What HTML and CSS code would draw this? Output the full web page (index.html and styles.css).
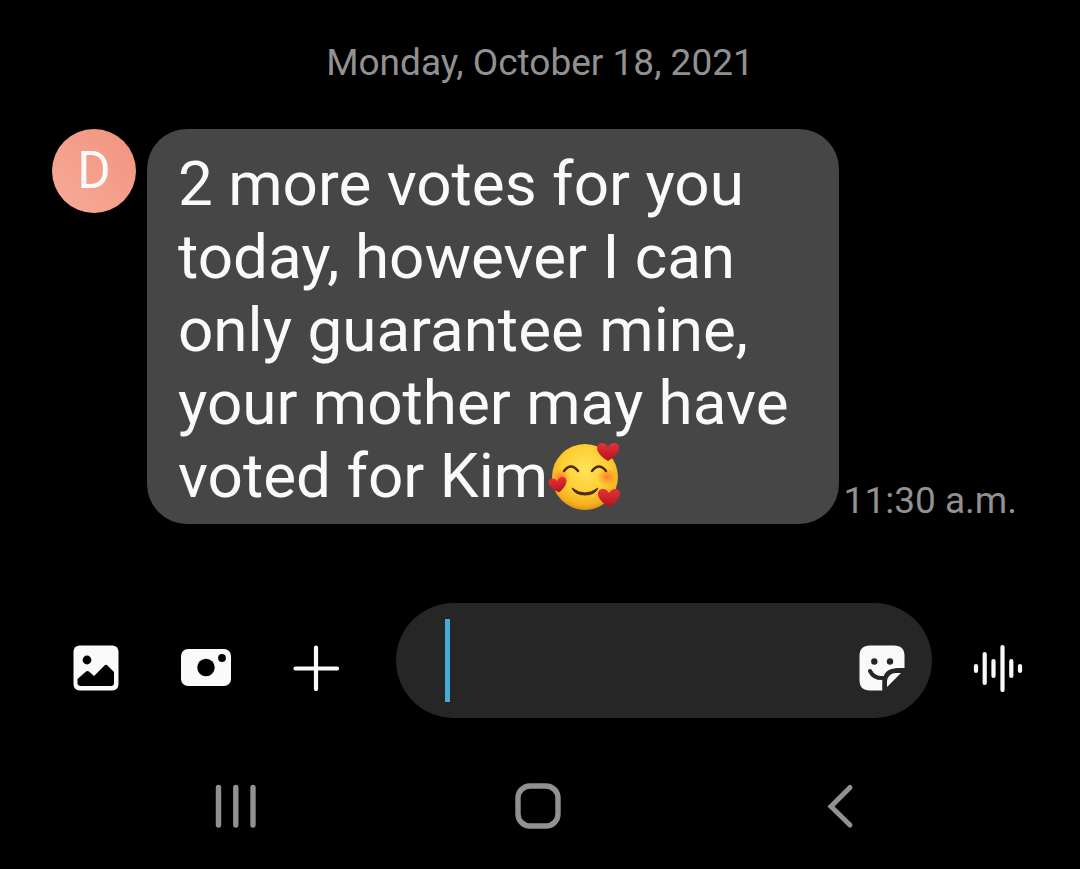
FILE: index.html
```html
<!DOCTYPE html>
<html lang="en">
<head>
<meta charset="utf-8">
<meta name="viewport" content="width=device-width, initial-scale=1">
<title>Messages</title>
<link rel="stylesheet" href="styles.css">
</head>
<body>
<main class="thread">
  <time class="date" datetime="2021-10-18">Monday, October 18, 2021</time>
  <article class="message">
    <div class="avatar">D</div>
    <p class="bubble">2 more votes for you today, however I can only guarantee mine, your mother may have voted for Kim<svg class="emoji" viewBox="0 0 72 72" role="img" aria-label="Smiling face with hearts">
      <defs>
        <radialGradient id="face" cx="50%" cy="38%" r="64%"><stop offset="0" stop-color="#ffe35a"/><stop offset=".55" stop-color="#fdcf32"/><stop offset=".85" stop-color="#f5b021"/><stop offset="1" stop-color="#d98416"/></radialGradient>
        <radialGradient id="blush"><stop offset="0" stop-color="#ff6a2c" stop-opacity=".85"/><stop offset="1" stop-color="#ff7a2c" stop-opacity="0"/></radialGradient>
        <linearGradient id="heart" x2="0" y2="1"><stop offset="0" stop-color="#e23338"/><stop offset="1" stop-color="#b5121c"/></linearGradient>
        <path id="heartShape" d="M0 9C-5 6-11 1-11-4C-11-10-3-11 0-5C3-11 11-10 11-4C11 1 5 6 0 9Z"/>
      </defs>
      <circle cx="37" cy="37" r="33" fill="url(#face)"/>
      <ellipse cx="13" cy="37" rx="9" ry="8" fill="url(#blush)"/>
      <ellipse cx="59" cy="37" rx="10" ry="9" fill="url(#blush)"/>
      <path d="M16 31Q23 22 30 31M44 31Q51 22 58 31" fill="none" stroke="#4a2810" stroke-width="2.400" stroke-linecap="round"/>
      <path d="M24 48Q37 58 50 48Q47 55 37 55Q27 55 24 48Z" fill="#4a2810" stroke="#4a2810" stroke-linejoin="round"/>
      <use href="#heartShape" fill="url(#heart)" transform="translate(60 12)"/>
      <use href="#heartShape" fill="url(#heart)" transform="translate(10 45) rotate(-10) scale(.82)"/>
      <use href="#heartShape" fill="url(#heart)" transform="translate(61 58)"/>
    </svg></p>
    <time class="sent" datetime="11:30">11:30 a.m.</time>
  </article>
</main>
<form class="composer">
  <button class="tool" type="button" aria-label="Gallery">
    <svg width="46" height="46" viewBox="0 0 46 46"><rect width="45" height="45" x=".5" y=".5" rx="6" fill="#fafafa"/><circle cx="14" cy="15" r="4.400"/><path d="M4.500 34L13 26.500Q14.500 25.500 16 26.500L21 31L31.500 20.500Q33 19 34.500 20.500L41 27V38Q41 41 38 41H8Q4.500 41 4.500 38Z"/></svg>
  </button>
  <button class="tool" type="button" aria-label="Camera">
    <svg width="52" height="46" viewBox="0 0 52 46"><rect x="1" y="4" width="50" height="37" rx="7" fill="#fafafa"/><circle cx="26" cy="22.500" r="8.700"/><circle cx="42" cy="13" r="3.900"/></svg>
  </button>
  <button class="tool" type="button" aria-label="More">
    <svg width="46" height="46" viewBox="0 0 46 46"><path d="M23 2.500V44M2.500 23.500H44" stroke="#fafafa" stroke-width="4.200" stroke-linecap="round"/></svg>
  </button>
  <div class="field">
    <input class="entry" type="text" aria-label="Message">
    <span class="caret"></span>
    <button class="sticker" type="button" aria-label="Stickers">
      <svg width="46" height="46" viewBox="0 0 46 46"><path d="M11 .5H35Q45.500 .5 45.500 11V23H40Q37 23 34 24Q28 25 25.500 30Q23.500 32 23.500 36V45.500H11Q.5 45.500 .5 35V11Q.5 .5 11 .5Z" fill="#fafafa"/><circle cx="15.300" cy="16.500" r="3.200" fill="#262626"/><circle cx="31" cy="16.500" r="3.200" fill="#262626"/><path d="M11 26Q15 34 25 33" fill="none" stroke="#262626" stroke-width="4" stroke-linecap="round"/><path d="M25.500 46V36Q27 25.500 37 25.500H46" fill="none" stroke="#262626" stroke-width="4"/><path d="M28 42V36Q29.500 28 37 28H42Z" fill="#fafafa"/></svg>
    </button>
  </div>
  <button class="voice" type="button" aria-label="Voice message">
    <svg width="50" height="48" viewBox="0 0 50 48"><path d="M3 22V27M11.700 10V39M20.500 17V32M29.500 3V46M38.300 17V32M47 22V27" stroke="#fafafa" stroke-width="4.200" stroke-linecap="round"/></svg>
  </button>
</form>
<nav class="system" aria-label="System navigation">
  <button type="button" aria-label="Recent apps"><svg width="42" height="46" viewBox="0 0 42 46"><path d="M3.500 4.500V42M20.800 4.500V42M38 4.500V42" stroke="#919191" stroke-width="5.400" stroke-linecap="round"/></svg></button>
  <button type="button" aria-label="Home"><svg width="46" height="46" viewBox="0 0 46 46"><rect x="3" y="3" width="40" height="40" rx="12" fill="none" stroke="#919191" stroke-width="5.400"/></svg></button>
  <button type="button" aria-label="Back"><svg width="28" height="46" viewBox="0 0 28 46"><path d="M24 4.500L5 23.500L24 42" fill="none" stroke="#919191" stroke-width="5" stroke-linecap="round"/></svg></button>
</nav>
</body>
</html>
```
FILE: styles.css
```css
* {
  box-sizing: border-box;
}

body {
  margin: 0;
  min-height: 100vh;
  display: flex;
  flex-direction: column;
  background: #000;
  color: #fafafa;
  font-family: Roboto, "Liberation Sans", sans-serif;
}

button {
  display: flex;
  align-items: center;
  justify-content: center;
  padding: 0;
  border: 0;
  background: none;
}

.thread {
  display: flex;
  flex-direction: column;
  gap: 44px;
  padding-top: 41px;
}

.date,
.sent {
  color: #919191;
  font-size: 37px;
  line-height: 44px;
}

.date {
  text-align: center;
}

.message {
  display: flex;
  align-items: flex-end;
  padding: 0 63px 0 52px;
}

.avatar {
  flex: none;
  align-self: flex-start;
  width: 84px;
  height: 84px;
  margin-right: 11px;
  border-radius: 50%;
  background: linear-gradient(45deg, #f6ab98, #f2937f);
  font-size: 51px;
  line-height: 84px;
  text-align: center;
}

.bubble {
  flex: 1;
  margin: 0;
  padding: 18px 31px 12px;
  border-radius: 40px;
  background: #464646;
  font-size: 62px;
  line-height: 73px;
}

.emoji {
  width: 72px;
  height: 72px;
  vertical-align: -7px;
  margin: -8px 0;
}

.sent {
  flex: none;
  margin: 0 0 1px 5px;
  white-space: nowrap;
}

.composer {
  display: flex;
  align-items: flex-end;
  padding: 79px 16px 0 41px;
}

.tool {
  flex: none;
  width: 110px;
  height: 100px;
}

.field {
  position: relative;
  flex: 1;
  display: flex;
  align-items: flex-end;
  min-width: 0;
  height: 115px;
  margin-left: 25px;
  padding: 0 27px 0 49px;
  border-radius: 58px;
  background: #262626;
}

.entry {
  flex: 1;
  min-width: 0;
  height: 115px;
  padding: 0;
  border: 0;
  outline: 0;
  background: none;
  color: #fafafa;
  font: inherit;
  font-size: 62px;
}

.caret {
  position: absolute;
  left: 49px;
  top: 16px;
  width: 5px;
  height: 83px;
  background: #45acd8;
}

.sticker {
  flex: none;
  height: 100px;
}

.voice {
  flex: none;
  width: 132px;
  height: 100px;
}

.system {
  display: flex;
  padding: 38px 89px 12px 85px;
}

.system button {
  flex: 1;
  height: 100px;
}
```
